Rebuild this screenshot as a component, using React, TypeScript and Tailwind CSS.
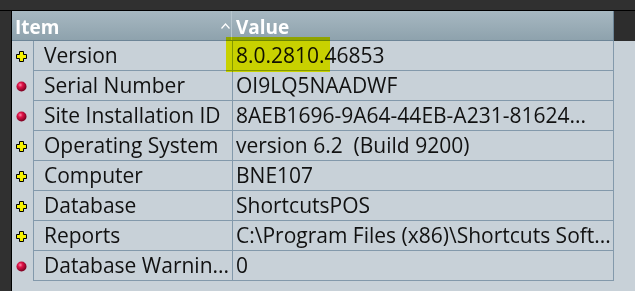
import React from "react";

type Row = { icon: "plus" | "dot"; item: string; value: string };

const rows: Row[] = [
  { icon: "plus", item: "Version", value: "8.0.2810.46853" },
  { icon: "dot", item: "Serial Number", value: "OI9LQ5NAADWF" },
  { icon: "dot", item: "Site Installation ID", value: "8AEB1696-9A64-44EB-A231-81624..." },
  { icon: "plus", item: "Operating System", value: "version 6.2  (Build 9200)" },
  { icon: "plus", item: "Computer", value: "BNE107" },
  { icon: "plus", item: "Database", value: "ShortcutsPOS" },
  { icon: "plus", item: "Reports", value: "C:\\Program Files (x86)\\Shortcuts Soft..." },
  { icon: "dot", item: "Database Warnin...", value: "0" },
];

function PlusIcon() {
  return (
    <svg width="11" height="11" viewBox="0 0 11 11">
      <path
        d="M3.5 0.5h4v3h3v4h-3v3h-4v-3h-3v-4h3z"
        fill="#f4f000"
        stroke="#000"
        strokeWidth="1"
      />
    </svg>
  );
}

function DotIcon() {
  return (
    <svg width="11" height="11" viewBox="0 0 11 11">
      <defs>
        <radialGradient id="rg" cx="0.38" cy="0.35" r="0.65">
          <stop offset="0" stopColor="#ff8aa8" />
          <stop offset="0.35" stopColor="#e0144a" />
          <stop offset="1" stopColor="#7a0020" />
        </radialGradient>
      </defs>
      <circle cx="5.5" cy="5.5" r="5" fill="url(#rg)" />
    </svg>
  );
}

export default function App() {
  const font = { fontFamily: '"Open Sans", "Noto Sans", sans-serif' };
  return (
    <div className="w-[635px] h-[291px] bg-[#303030] flex flex-col overflow-hidden relative" style={font}>
      <div className="h-[10px] shrink-0" />
      <div className="flex flex-1 border-t border-black">
        <div className="w-[12px] shrink-0 border-r border-black" />
        <div className="flex-1 flex flex-col">
          {/* header */}
          <div className="flex h-[30px] shrink-0">
            <div className="w-[602px] flex bg-gradient-to-b from-[#a7b8c1] to-[#8ea2ad] border-b border-r border-[#6d8597]">
              <div className="w-[220px] relative border-r border-[#b7c6ce] flex items-center pl-[3px] pt-[3px]">
                <span className="text-white font-bold text-[19px] leading-none">Item</span>
                <svg className="absolute right-[1px] top-[12px]" width="9" height="6" viewBox="0 0 9 6">
                  <path d="M0.5 5.5L4.5 1L8.5 5.5" fill="none" stroke="#ffffff" strokeWidth="1.2" />
                </svg>
              </div>
              <div className="flex-1 flex items-center pl-[4px] pt-[3px]">
                <span className="text-white font-bold text-[19px] leading-none">Value</span>
              </div>
            </div>
            <div className="flex-1 bg-[#2d2d2d]" />
          </div>
          {/* body */}
          <div className="flex-1 bg-[#c8d1d8]">
            {rows.map((r, i) => (
              <div key={i} className="flex h-[30px]">
                <div className="w-[21px] shrink-0 flex items-center pl-[4px]">
                  {r.icon === "plus" ? <PlusIcon /> : <DotIcon />}
                </div>
                <div className="w-[581px] flex border-l border-r border-b border-[#8399ab]">
                  <div className="w-[199px] shrink-0 border-r border-[#8399ab] flex items-center pl-[10px] overflow-hidden">
                    <span className="text-[21px] text-[#111] whitespace-pre leading-none">{r.item}</span>
                  </div>
                  <div className="flex-1 flex items-center pl-[3px] overflow-hidden">
                    <span className="text-[21px] text-[#111] whitespace-pre leading-none">{r.value}</span>
                  </div>
                </div>
              </div>
            ))}
          </div>
        </div>
      </div>
      <div className="absolute left-[226px] top-[37px] w-[104px] h-[35px] bg-[#ffff00] mix-blend-multiply" />
    </div>
  );
}
